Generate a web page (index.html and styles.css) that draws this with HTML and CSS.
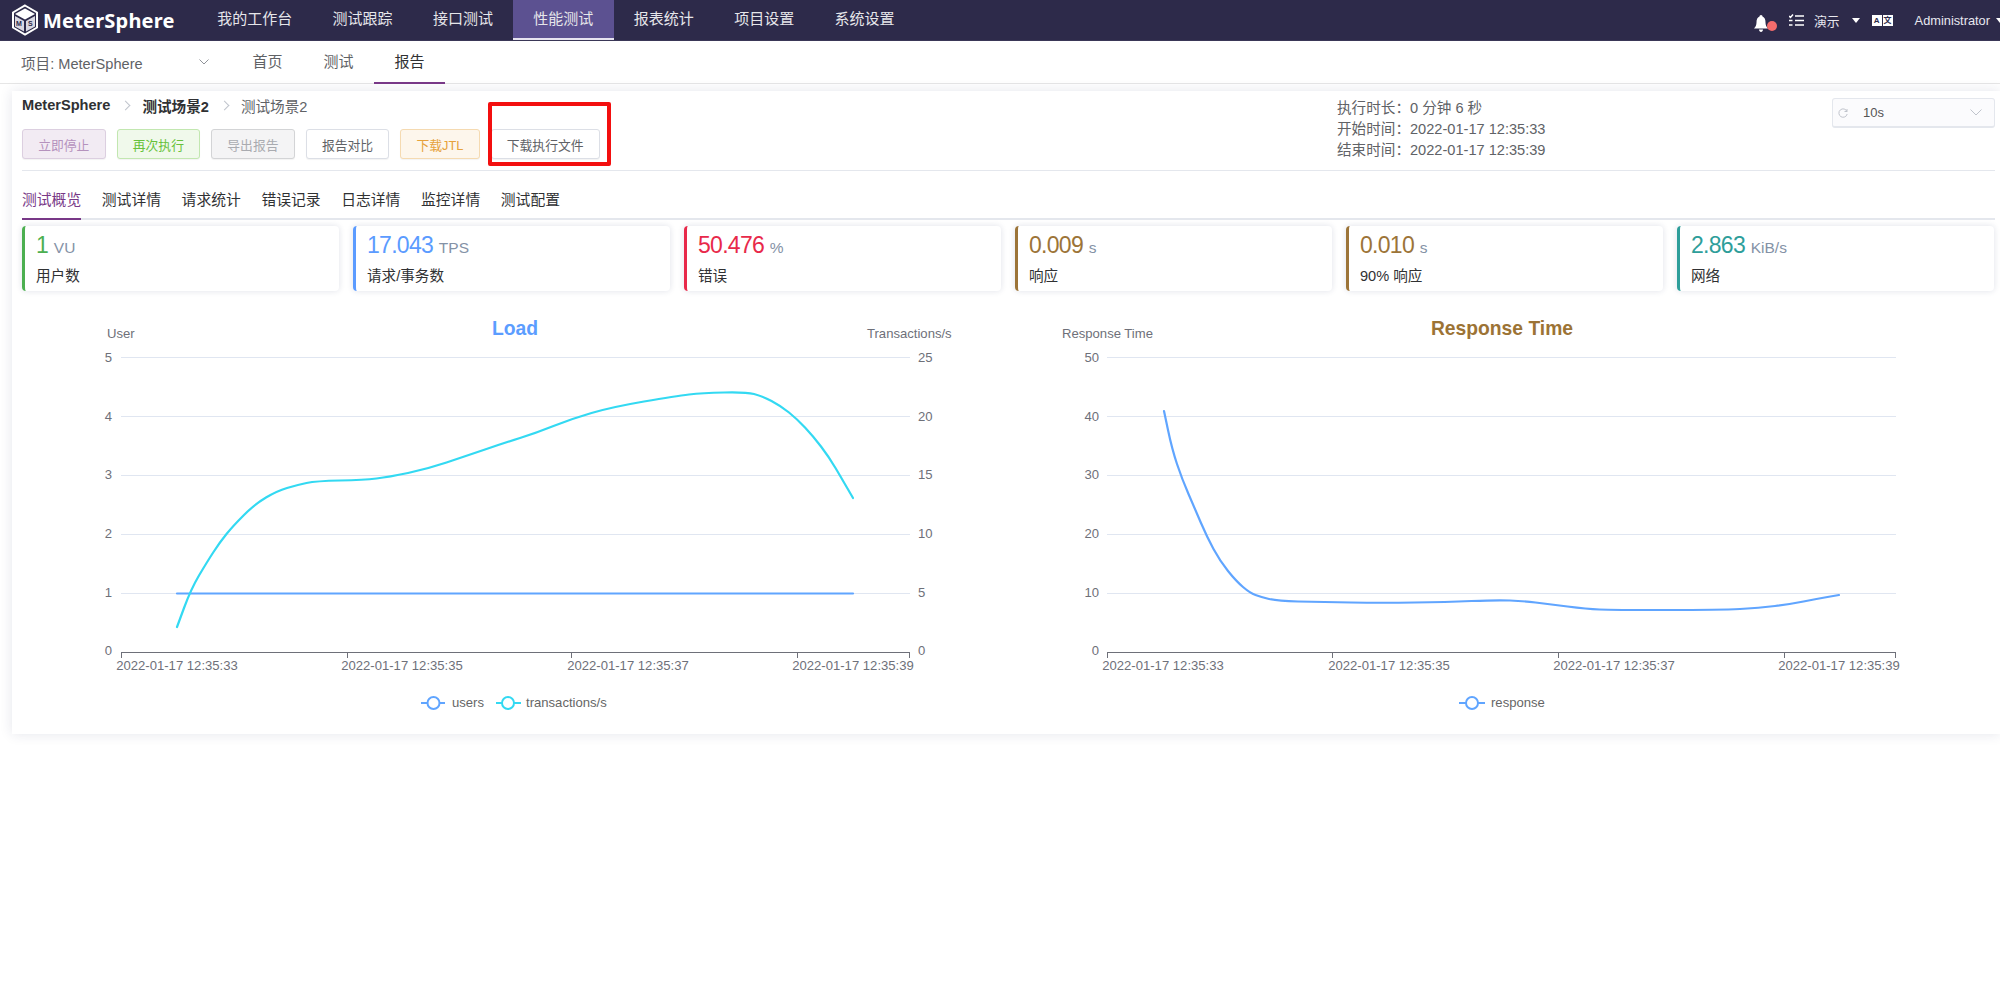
FILE: index.html
```html
<!DOCTYPE html>
<html lang="zh-CN">
<head>
    <meta charset="UTF-8">
    <title>MeterSphere</title>
    <link rel="stylesheet" href="styles.css">
</head>
<body>
    <header class="topbar">
        <div class="logo">
            <svg class="logo-icon" width="28" height="32" viewBox="0 0 28 32">
                <path d="M14 1.5 26 8.5V23.5L14 30.5 2 23.5V8.5Z" fill="none" stroke="#fff" stroke-width="2"/>
                <path d="M14 4.5 24 10 14 15.5 4 10Z" fill="#fff"/>
                <path d="M4 12 13 17V27.5L4 22.5Z" fill="#d9d8e2"/>
                <path d="M24 12 15 17V27.5L24 22.5Z" fill="#d9d8e2"/>
                <text x="5" y="22" class="logo-letter">M</text>
                <text x="17" y="22" class="logo-letter">S</text>
            </svg>
            <span class="logo-text">MeterSphere</span>
        </div>
        <nav class="main-nav">
            <a class="main-nav-item">我的工作台</a>
            <a class="main-nav-item">测试跟踪</a>
            <a class="main-nav-item">接口测试</a>
            <a class="main-nav-item active">性能测试</a>
            <a class="main-nav-item">报表统计</a>
            <a class="main-nav-item">项目设置</a>
            <a class="main-nav-item">系统设置</a>
        </nav>
        <div class="top-right">
            <span class="bell">
                <svg width="14" height="17" viewBox="0 0 14 17">
                    <path d="M7 0C8 0 8.500 .8 8.500 1.600 10.800 2.400 11.500 5 11.500 7.500 11.500 10 12.500 12 14 13.500H0C1.500 12 2.500 10 2.500 7.500 2.500 5 3.200 2.400 5.500 1.600 5.500 .8 6 0 7 0Z" fill="#fff"/>
                    <path d="M5 14.500H9C9 16 8 17 7 17 6 17 5 16 5 14.500Z" fill="#fff"/>
                </svg>
                <i class="bell-dot"></i>
            </span>
            <svg class="list-icon" width="15" height="13" viewBox="0 0 15 13">
                <path d="M0 2 1.500 3.500 4 .5M6 2H15M0 6.500H3.500M6 6.500H15M0 11H3.500M6 11H15" fill="none" stroke="#fff" stroke-width="1.500"/>
            </svg>
            <span class="top-text workspace">演示</span>
            <i class="caret"></i>
            <span class="lang-icon"><b>A</b><b>文</b></span>
            <span class="top-text user">Administrator</span>
            <i class="caret"></i>
        </div>
    </header>

    <div class="subbar">
        <div class="project">
            <span>项目: MeterSphere</span>
            <svg width="10" height="6" viewBox="0 0 10 6"><path d="M.5.5 5 5 9.500.5" fill="none" stroke="#909399"/></svg>
        </div>
        <a class="sub-item">首页</a>
        <a class="sub-item">测试</a>
        <a class="sub-item active">报告</a>
    </div>

    <main class="report">
        <div class="report-head">
            <div>
                <div class="crumbs">
                    <b>MeterSphere</b><i class="crumb-sep"></i><b>测试场景2</b><i class="crumb-sep"></i><span>测试场景2</span>
                </div>
                <div class="actions">
                    <button class="btn btn-stop">立即停止</button>
                    <button class="btn btn-run">再次执行</button>
                    <button class="btn btn-export">导出报告</button>
                    <button class="btn">报告对比</button>
                    <button class="btn btn-jtl">下载JTL</button>
                    <button class="btn btn-marked">下载执行文件<i class="red-box"></i></button>
                </div>
            </div>
            <div class="run-info">
                <div>执行时长：0 分钟 6 秒</div>
                <div>开始时间：2022-01-17 12:35:33</div>
                <div>结束时间：2022-01-17 12:35:39</div>
            </div>
            <div class="refresh">
                <svg width="10" height="10" viewBox="0 0 10 10"><path d="M9 3.500A4.200 4.200 0 1 0 9.200 6M9 1V3.500H6.500" fill="none" stroke="#c0c4cc"/></svg>
                <span>10s</span>
                <svg class="refresh-arrow" width="12" height="7" viewBox="0 0 12 7"><path d="M.5.5 6 6 11.500.5" fill="none" stroke="#c0c4cc"/></svg>
            </div>
        </div>

        <div class="tabs">
            <a class="tab active">测试概览</a>
            <a class="tab">测试详情</a>
            <a class="tab">请求统计</a>
            <a class="tab">错误记录</a>
            <a class="tab">日志详情</a>
            <a class="tab">监控详情</a>
            <a class="tab">测试配置</a>
        </div>

        <div class="stats">
            <div class="stat stat-green">
                <div class="stat-value">1 <small>VU</small></div>
                <div class="stat-label">用户数</div>
            </div>
            <div class="stat stat-blue">
                <div class="stat-value">17.043 <small>TPS</small></div>
                <div class="stat-label">请求/事务数</div>
            </div>
            <div class="stat stat-red">
                <div class="stat-value">50.476 <small>%</small></div>
                <div class="stat-label">错误</div>
            </div>
            <div class="stat stat-brown">
                <div class="stat-value">0.009 <small>s</small></div>
                <div class="stat-label">响应</div>
            </div>
            <div class="stat stat-brown">
                <div class="stat-value">0.010 <small>s</small></div>
                <div class="stat-label">90% 响应</div>
            </div>
            <div class="stat stat-teal">
                <div class="stat-value">2.863 <small>KiB/s</small></div>
                <div class="stat-label">网络</div>
            </div>
        </div>

        <div class="charts">
            <svg class="chart" width="978" height="420" viewBox="22 310 978 420">
                <text x="515" y="336" class="chart-title title-load">Load</text>
                <text x="107" y="339" class="axis-text">User</text>
                <text x="867" y="339" class="axis-text">Transactions/s</text>

                <path class="grid" d="M121 358.500H910M121 417.500H910M121 476.500H910M121 535.500H910M121 594.500H910"/>
                <path class="axis" d="M121 653.500H910M121.500 653V659M347.500 653V659M571.500 653V659M797.500 653V659M909.500 653V659"/>

                <text x="112" y="363" class="axis-text end">5</text>
                <text x="112" y="422" class="axis-text end">4</text>
                <text x="112" y="480" class="axis-text end">3</text>
                <text x="112" y="539" class="axis-text end">2</text>
                <text x="112" y="598" class="axis-text end">1</text>
                <text x="112" y="656" class="axis-text end">0</text>

                <text x="918" y="363" class="axis-text">25</text>
                <text x="918" y="422" class="axis-text">20</text>
                <text x="918" y="480" class="axis-text">15</text>
                <text x="918" y="539" class="axis-text">10</text>
                <text x="918" y="598" class="axis-text">5</text>
                <text x="918" y="656" class="axis-text">0</text>

                <text x="177" y="671" class="axis-text mid">2022-01-17 12:35:33</text>
                <text x="402" y="671" class="axis-text mid">2022-01-17 12:35:35</text>
                <text x="628" y="671" class="axis-text mid">2022-01-17 12:35:37</text>
                <text x="853" y="671" class="axis-text mid">2022-01-17 12:35:39</text>

                <path class="line line-blue" d="M177 594.500H853"/>
                <path class="line line-cyan" d="M177 628L184 609Q191 590 199 576.500Q207 563 213.500 553Q220 543 226.500 535Q233 527 244 516Q255 505 266 498.500Q277 492 287 489Q297 486 306.500 484Q316 482 340 481.500Q364 481 376.500 479.500Q389 478 408 474Q427 470 446.500 463.500Q466 457 485 450.500Q504 444 520 439Q536 434 553.500 427Q571 420 591.500 414Q612 408 644 402.500Q676 397 689 395.500Q702 394 724 393.500Q746 393 754 395Q762 397 771.500 402Q781 407 789 413.500Q797 420 805 428.500Q813 437 821 447.500Q829 458 835.500 469Q842 480 847.500 489.500L853 499"/>

                <path class="legend-dash line-blue" d="M421 704H445"/>
                <circle class="legend-dot line-blue" cx="433.500" cy="704" r="6"/>
                <text x="452" y="708" class="legend-text">users</text>
                <path class="legend-dash line-cyan" d="M496 704H521"/>
                <circle class="legend-dot line-cyan" cx="508" cy="704" r="6"/>
                <text x="526" y="708" class="legend-text">transactions/s</text>
            </svg>

            <svg class="chart" width="995" height="420" viewBox="1000 310 995 420">
                <text x="1502" y="336" class="chart-title title-response">Response Time</text>
                <text x="1062" y="339" class="axis-text">Response Time</text>

                <path class="grid" d="M1107 358.500H1896M1107 417.500H1896M1107 476.500H1896M1107 535.500H1896M1107 594.500H1896"/>
                <path class="axis" d="M1107 653.500H1896M1107.500 653V659M1332.500 653V659M1558.500 653V659M1784.500 653V659M1895.500 653V659"/>

                <text x="1099" y="363" class="axis-text end">50</text>
                <text x="1099" y="422" class="axis-text end">40</text>
                <text x="1099" y="480" class="axis-text end">30</text>
                <text x="1099" y="539" class="axis-text end">20</text>
                <text x="1099" y="598" class="axis-text end">10</text>
                <text x="1099" y="656" class="axis-text end">0</text>

                <text x="1163" y="671" class="axis-text mid">2022-01-17 12:35:33</text>
                <text x="1389" y="671" class="axis-text mid">2022-01-17 12:35:35</text>
                <text x="1614" y="671" class="axis-text mid">2022-01-17 12:35:37</text>
                <text x="1839" y="671" class="axis-text mid">2022-01-17 12:35:39</text>

                <path class="line line-blue" d="M1164 412L1168 431Q1172 450 1177 465Q1182 480 1188.500 495Q1195 510 1201 524Q1207 538 1213.500 550Q1220 562 1228 572Q1236 582 1243 588Q1250 594 1255.500 596Q1261 598 1269 600Q1277 602 1298 602.500Q1319 603 1351 603.500Q1383 604 1414.500 603.500Q1446 603 1471.500 602Q1497 601 1510 601.500Q1523 602 1535.500 603.500Q1548 605 1567.500 607.500Q1587 610 1599.500 610.500Q1612 611 1666.500 611Q1721 611 1740 610Q1759 609 1775 607Q1791 605 1803.500 602.500Q1816 600 1827.500 598L1839 596"/>

                <path class="legend-dash line-blue" d="M1459 704H1485"/>
                <circle class="legend-dot line-blue" cx="1472" cy="704" r="6"/>
                <text x="1491" y="708" class="legend-text">response</text>
            </svg>
        </div>
    </main>
</body>
</html>
```

FILE: styles.css
```css
*{
    margin: 0;
    padding: 0;
    box-sizing: border-box;
}
html,body{
    height: 100%;
    background: #fff;
    overflow: hidden;
}
body{
    font-family: "Liberation Sans", "Noto Sans CJK SC", sans-serif;
    font-size: 15px;
    color: #303133;
}
i{
    font-style: normal;
}

/* top bar */
.topbar{
    height: 41px;
    background: #2d2a4a;
    display: flex;
    color: #fff;
    border-bottom: 1px solid #3a3757;
}
.logo{
    width: 197px;
    padding-left: 11px;
    display: flex;
    align-items: center;
}
.logo-icon{
    flex: none;
}
.logo-letter{
    font-size: 7px;
    font-weight: 700;
    fill: #2d2a4a;
}
.logo-text{
    margin-left: 4px;
    font-family: "Noto Sans", sans-serif;
    font-size: 20px;
    font-weight: 700;
    letter-spacing: .2px;
}
.main-nav{
    display: flex;
}
.main-nav-item{
    padding: 0 20.200px;
    line-height: 38px;
    height: 40px;
    color: #e6e6ea;
}
.main-nav-item.active{
    background: #5c5191;
    border-bottom: 2px solid #e6e3f0;
}
.top-right{
    margin-left: auto;
    display: flex;
    align-items: center;
    height: 40px;
    margin-right: -4px;
}
.bell{
    position: relative;
    width: 14px;
    height: 17px;
    margin-top: 6px;
    margin-right: 21px;
}
.bell-dot{
    position: absolute;
    left: 13px;
    top: 6px;
    width: 10px;
    height: 10px;
    border-radius: 50%;
    background: #f56c6c;
}
.list-icon{
    margin-right: 10px;
}
.top-text{
    font-size: 12.800px;
    color: #e8e8f0;
}
.caret{
    width: 0;
    height: 0;
    margin-left: 12px;
    border: 4px solid transparent;
    border-top: 5px solid #fff;
    border-bottom: 0;
}
.lang-icon{
    display: flex;
    gap: 1px;
    margin-left: 12px;
}
.lang-icon b{
    width: 10px;
    height: 11px;
    background: #fff;
    color: #2d2a4a;
    font-size: 8px;
    line-height: 11px;
    text-align: center;
}
.user{
    margin-left: 22px;
}
.user + .caret{
    margin-left: 6px;
}

/* second bar */
.subbar{
    height: 43px;
    display: flex;
    border-bottom: 1px solid #e6e6e6;
}
.project{
    width: 232px;
    padding-left: 21px;
    display: flex;
    align-items: center;
    font-size: 14.600px;
    color: #606266;
}
.project svg{
    margin-left: 56px;
}
.sub-item{
    width: 71px;
    line-height: 41px;
    text-align: center;
    color: #606266;
}
.sub-item.active{
    color: #303133;
    border-bottom: 2px solid #783887;
    height: 43px;
}

/* report card */
.report{
    margin: 7px 0 0 12px;
    height: 643px;
    padding: 4px 5px 5px 10px;
    background: #fff;
    box-shadow: 0 0 12px rgba(31, 45, 90, .12);
}
.report-head{
    display: grid;
    grid-template-columns: 1315px 495px auto;
    height: 76px;
    border-bottom: 1px solid #e4e7ed;
}
.crumbs{
    display: flex;
    align-items: center;
    height: 20px;
    color: #606266;
    font-size: 14.600px;
}
.crumbs b{
    color: #303133;
}
.crumb-sep{
    width: 7px;
    height: 7px;
    margin: 0 13px 0 12px;
    border-top: 1px solid #c0c4cc;
    border-right: 1px solid #c0c4cc;
    transform: rotate(45deg);
}
.actions{
    display: flex;
    gap: 11px;
    margin-top: 14px;
}
.btn{
    height: 30px;
    padding: 0 15.200px;
    background: #fff;
    border: 1px solid #dcdfe6;
    border-radius: 3px;
    font-family: inherit;
    font-size: 12.800px;
    color: #606266;
    box-shadow: 0 1px 1px rgba(0, 0, 0, .05);
}
.btn-stop{
    background: #f2ebf3;
    border-color: #dccfe0;
    color: #b592bd;
}
.btn-run{
    background: #f0f9eb;
    border-color: #c2e7b0;
    color: #67c23a;
}
.btn-export{
    background: #f4f4f5;
    border-color: #d3d4d6;
    color: #a9abb0;
}
.btn-jtl{
    background: #fdf6ec;
    border-color: #f5dab1;
    color: #e6a23c;
}
.btn-marked{
    position: relative;
}
.red-box{
    position: absolute;
    left: -4px;
    right: -12px;
    top: -28px;
    bottom: -8px;
    border: 4px solid #f30f0f;
    border-radius: 2px;
}
.run-info{
    padding-top: 3px;
    font-size: 14.600px;
    line-height: 21px;
    color: #606266;
}
.refresh{
    display: flex;
    align-items: center;
    height: 30px;
    margin-top: 3px;
    padding: 0 12px 0 5px;
    background: #fbfbfd;
    border: 1px solid #e4e7ed;
    border-bottom-width: 2px;
    border-radius: 3px;
    font-size: 13px;
    color: #555;
}
.refresh span{
    margin-left: 15px;
}
.refresh-arrow{
    margin-left: auto;
}

/* tabs */
.tabs{
    display: flex;
    gap: 20.600px;
    height: 49px;
    border-bottom: 2px solid #e4e7ed;
}
.tab{
    height: 49px;
    padding-top: 19px;
    line-height: 20px;
    font-size: 14.800px;
}
.tab.active{
    color: #783887;
    border-bottom: 2px solid #783887;
}

/* stat cards */
.stats{
    display: flex;
    gap: 14px;
    margin-top: 6px;
}
.stat{
    width: 317px;
    height: 65px;
    padding: 7px 0 0 11px;
    border-left: 3px solid;
    border-radius: 4px;
    box-shadow: 0 0 6px rgba(31, 45, 90, .14);
}
.stat-value{
    font-size: 23px;
    line-height: 24px;
    letter-spacing: -.7px;
}
.stat-value small{
    font-size: 15.500px;
    letter-spacing: 0;
    color: #8492a6;
}
.stat-label{
    margin-top: 6px;
    line-height: 20px;
    font-size: 14.600px;
}
.stat-green{
    border-color: #4caf50;
}
.stat-green .stat-value{
    color: #4caf50;
}
.stat-blue{
    border-color: #5b9bff;
}
.stat-blue .stat-value{
    color: #5b9bff;
}
.stat-red{
    border-color: #e8294a;
}
.stat-red .stat-value{
    color: #e8294a;
}
.stat-brown{
    border-color: #9c7438;
}
.stat-brown .stat-value{
    color: #9c7438;
}
.stat-teal{
    border-color: #2e9e9a;
}
.stat-teal .stat-value{
    color: #2e9e9a;
}

/* charts */
.charts{
    display: flex;
    margin-top: 18px;
}
.chart{
    display: block;
    flex: none;
}
.chart text{
    font-family: "Liberation Sans", sans-serif;
}
.chart-title{
    font-size: 19.300px;
    font-weight: 700;
    text-anchor: middle;
}
.title-load{
    fill: #5b9dff;
}
.title-response{
    fill: #9c7335;
}
.axis-text{
    font-size: 13.100px;
    fill: #6e7079;
}
.axis-text.end{
    text-anchor: end;
}
.axis-text.mid{
    text-anchor: middle;
}
.grid{
    stroke: #e0e6f1;
    fill: none;
}
.axis{
    stroke: #6e7079;
    fill: none;
}
.line{
    fill: none;
    stroke-width: 2.200;
    stroke-linejoin: round;
    stroke-linecap: round;
}
.line-blue{
    stroke: #60a5ff;
}
.line-cyan{
    stroke: #33d9f2;
}
.legend-dash{
    fill: none;
    stroke-width: 2;
}
.legend-dot{
    fill: #fff;
    stroke-width: 2;
}
.legend-text{
    font-size: 13.100px;
    fill: #666;
}
```
